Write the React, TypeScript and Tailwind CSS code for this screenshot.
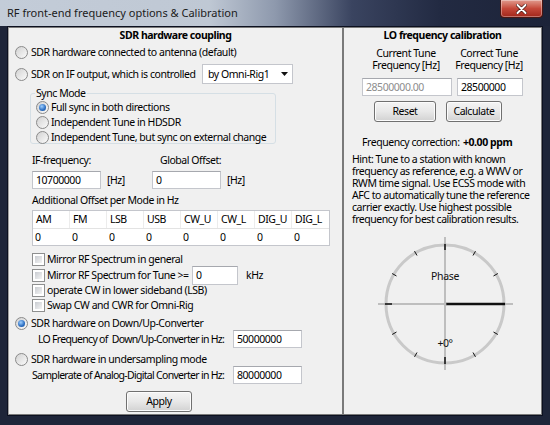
import React from "react";

function Radio({ checked = false }: { checked?: boolean }) {
  return (
    <span className="w-[13px] h-[13px] rounded-full border border-[#8a8a8a] bg-linear-to-br from-[#d2d2d2] to-[#fbfbfb] flex items-center justify-center shrink-0">
      {checked && (
        <span className="w-[7px] h-[7px] rounded-full bg-[radial-gradient(circle_at_40%_35%,#9fd0ff,#2a6cc0_60%,#174f96)]" />
      )}
    </span>
  );
}

function Check() {
  return (
    <span className="w-[13px] h-[13px] border border-[#8e8f8f] bg-white p-[2px] shrink-0 flex">
      <span className="block w-full h-full bg-linear-to-br from-[#c9ccd1] to-[#f4f4f4]" />
    </span>
  );
}

function TextBox({
  value,
  w,
  muted = false,
  h = "h-[18px]",
}: {
  value: string;
  w: string;
  muted?: boolean;
  h?: string;
}) {
  return (
    <div
      className={`${w} ${h} shrink-0 border border-[#c4c6cc] border-t-[#a6a8ae] bg-white flex items-center px-[3px] ${
        muted ? "text-[#8d8d8d]" : "text-black"
      }`}
    >
      {value}
    </div>
  );
}

function Button({ label, w }: { label: string; w: string }) {
  return (
    <div
      className={`${w} h-full border border-[#707070] rounded-[3px] bg-linear-to-b from-[#f4f4f4] via-[#e8e8e8] to-[#d2d2d2] flex items-center justify-center shadow-[inset_0_0_0_1px_#fcfcfc]`}
    >
      {label}
    </div>
  );
}

const modes = ["AM", "FM", "LSB", "USB", "CW_U", "CW_L", "DIG_U", "DIG_L"];

function Dial() {
  const cx = 70;
  const cy = 70;
  const r = 59;
  const ticks = [30, 60, 120, 150, 210, 240, 300, 330];
  return (
    <svg width="140" height="140" viewBox="0 0 140 140">
      <circle cx={cx} cy={cy} r={r} fill="none" stroke="#c9c9c9" strokeWidth="3" />
      <line x1={cx - 67} y1={cy} x2={cx + 68} y2={cy} stroke="#8c8c8c" strokeWidth="1" />
      <line x1={cx} y1={cy - 67} x2={cx} y2={cy + 66} stroke="#8c8c8c" strokeWidth="1" />
      {ticks.map((a) => {
        const rad = (a * Math.PI) / 180;
        const x1 = cx + Math.cos(rad) * (r - 3);
        const y1 = cy - Math.sin(rad) * (r - 3);
        const x2 = cx + Math.cos(rad) * (r + 2);
        const y2 = cy - Math.sin(rad) * (r + 2);
        return <line key={a} x1={x1} y1={y1} x2={x2} y2={y2} stroke="#111" strokeWidth="1" />;
      })}
      <line x1={cx - r - 1} y1={cy} x2={cx - r + 6} y2={cy} stroke="#111" strokeWidth="1.5" />
      <line x1={cx} y1={cy + r - 6} x2={cx} y2={cy + r + 1} stroke="#111" strokeWidth="1.5" />
      <line x1={cx} y1={cy - r - 1} x2={cx} y2={cy - r + 5} stroke="#111" strokeWidth="1.5" />
      <line x1={cx + 1} y1={cy} x2={cx + r + 1} y2={cy} stroke="#111" strokeWidth="2.5" />
      <circle cx={cx} cy={cy} r="1.5" fill="#bdbdbd" />
      <text x={cx} y={cy - 24} textAnchor="middle" fontSize="10.5" letterSpacing="-0.3" fill="#111" fontFamily="Noto Sans, sans-serif">
        Phase
      </text>
      <text x={cx} y={cy + 43} textAnchor="middle" fontSize="10.5" fill="#111" fontFamily="Noto Sans, sans-serif">
        +0°
      </text>
    </svg>
  );
}

export default function App() {
  return (
    <div className="w-[550px] h-[425px] flex flex-col bg-[#1e2539] font-['Noto_Sans',sans-serif] text-[10.5px] leading-[13px] tracking-[-0.45px] whitespace-nowrap text-black overflow-hidden">
      {/* Title bar */}
      <div className="h-[26px] shrink-0 flex items-start bg-[linear-gradient(90deg,#c3ccd8_0%,#bfc8d4_38%,#8e99ad_50%,#3a4460_64%,#222a42_80%,#1c2338_100%)]">
        <div className="pl-[7px] pt-[5px] text-[11px] leading-[15px] tracking-normal text-[#1b1b1b]">
          RF front-end frequency options &amp; Calibration
        </div>
        <div className="ml-auto mr-[7px] w-[43px] h-[18px] rounded-b-[4px] border border-[#4a1612] border-t-0 bg-linear-to-b from-[#e09a8e] via-[#c5483a] to-[#a1261a] flex items-center justify-center shadow-[inset_0_0_0_1px_rgba(255,255,255,0.35)]">
          <svg width="11" height="10" viewBox="0 0 11 10">
            <path d="M1.5 1 L9.5 9 M9.5 1 L1.5 9" stroke="#3a0b06" strokeWidth="3.2" strokeLinecap="round" />
            <path d="M1.5 1 L9.5 9 M9.5 1 L1.5 9" stroke="#ffffff" strokeWidth="2" strokeLinecap="round" />
          </svg>
        </div>
      </div>

      {/* Content */}
      <div className="flex-1 mx-[7px] mb-[9px] border border-[#0c1020] bg-[#f0f0f0] flex">
        {/* Left panel */}
        <div className="w-[335px] shrink-0 border border-[#7a7a7a] border-l-[#a0a0a0] flex flex-col">
          <div className="h-[15px] text-center font-bold leading-[15px]">SDR hardware coupling</div>
          <div className="h-[14px] mt-[2px] pl-[6px] flex items-center gap-[3px]">
            <Radio />
            <span>SDR hardware connected to antenna (default)</span>
          </div>
          <div className="h-[20px] mt-[5px] pl-[6px] flex items-center gap-[3px]">
            <Radio />
            <span className="w-[168px]">SDR on IF output, which is controlled</span>
            <div className="w-[91px] h-[20px] border border-[#c4c6cc] bg-white flex items-center pl-[5px] pr-[4px]">
              <span>by Omni-Rig1</span>
              <svg className="ml-auto" width="7" height="4" viewBox="0 0 7 4">
                <path d="M0 0 H7 L3.5 4 Z" fill="#111" />
              </svg>
            </div>
          </div>
          <fieldset className="ml-[21px] mt-[3px] w-[246px] h-[57px] border border-[#d5dfe5] rounded-[3px] px-[4px]">
            <legend className="px-[1px] leading-[13px]">Sync Mode</legend>
            <div className="flex flex-col">
              <div className="h-[15px] ml-[1px] flex items-center gap-[2px]">
                <Radio checked />
                <span>Full sync in both directions</span>
              </div>
              <div className="h-[15px] ml-[1px] flex items-center gap-[2px]">
                <Radio />
                <span>Independent Tune in HDSDR</span>
              </div>
              <div className="h-[15px] ml-[1px] flex items-center gap-[2px]">
                <Radio />
                <span>Independent Tune, but sync on external change</span>
              </div>
            </div>
          </fieldset>
          <div className="h-[14px] mt-[9px] pl-[23px] flex items-center">
            <span className="w-[128px]">IF-frequency:</span>
            <span>Global Offset:</span>
          </div>
          <div className="h-[18px] mt-[4px] pl-[23px] flex items-center">
            <TextBox value="10700000" w="w-[69px]" />
            <span className="ml-[6px] w-[45px]">[Hz]</span>
            <TextBox value="0" w="w-[69px]" />
            <span className="ml-[6px]">[Hz]</span>
          </div>
          <div className="h-[14px] mt-[4px] pl-[23px] flex items-center">Additional Offset per Mode in Hz</div>
          <div className="ml-[23px] mt-[3px] w-[298px] h-[36px] border border-[#c4c6cc] bg-white flex flex-col">
            <div className="h-[18px] grid grid-cols-8 border-b border-[#e3e3e3]">
              {modes.map((m) => (
                <div key={m} className="pl-[3px] flex items-center border-r border-[#ececec] last:border-r-0">
                  {m}
                </div>
              ))}
            </div>
            <div className="flex-1 grid grid-cols-8">
              {modes.map((m) => (
                <div key={m} className="pl-[2px] flex items-center">
                  0
                </div>
              ))}
            </div>
          </div>
          <div className="h-[16px] mt-[5px] pl-[23px] flex items-center gap-[2px]">
            <Check />
            <span>Mirror RF Spectrum in general</span>
          </div>
          <div className="h-[16px] pl-[23px] flex items-center gap-[2px]">
            <Check />
            <span className="w-[143px]">Mirror RF Spectrum for Tune &gt;=</span>
            <TextBox value="0" w="w-[46px]" h="h-[19px]" />
            <span className="ml-[6px]">kHz</span>
          </div>
          <div className="h-[15px] pl-[23px] flex items-center gap-[2px]">
            <Check />
            <span>operate CW in lower sideband (LSB)</span>
          </div>
          <div className="h-[15px] pl-[23px] flex items-center gap-[2px]">
            <Check />
            <span>Swap CW and CWR for Omni-Rig</span>
          </div>
          <div className="h-[14px] mt-[3px] pl-[6px] flex items-center gap-[3px]">
            <Radio checked />
            <span>SDR hardware on Down/Up-Converter</span>
          </div>
          <div className="h-[18px] pl-[29px] flex items-center">
            <span className="w-[195px] tracking-[-0.7px]">LO Frequency of&nbsp; Down/Up-Converter in Hz:</span>
            <TextBox value="50000000" w="w-[69px]" />
          </div>
          <div className="h-[14px] mt-[4px] pl-[6px] flex items-center gap-[3px]">
            <Radio />
            <span>SDR hardware in undersampling mode</span>
          </div>
          <div className="h-[18px] pl-[23px] flex items-center">
            <span className="w-[201px] tracking-[-0.7px]">Samplerate of Analog-Digital Converter in Hz:</span>
            <TextBox value="80000000" w="w-[69px]" />
          </div>
          <div className="h-[21px] mt-[7px] pl-[117px] flex">
            <Button label="Apply" w="w-[66px]" />
          </div>
        </div>

        {/* Right panel */}
        <div className="flex-1 border border-[#7a7a7a] flex flex-col">
          <div className="h-[15px] text-center font-bold leading-[15px]">LO frequency calibration</div>
          <div className="mt-[4px] pl-[21px] flex gap-[1px] leading-[12px] text-center">
            <div className="w-[82px] flex flex-col">
              <span>Current Tune</span>
              <span>Frequency [Hz]</span>
            </div>
            <div className="w-[82px] flex flex-col">
              <span>Correct Tune</span>
              <span>Frequency [Hz]</span>
            </div>
          </div>
          <div className="h-[18px] mt-[7px] pl-[18px] flex gap-[5px]">
            <TextBox value="28500000.00" w="w-[90px]" muted />
            <TextBox value="28500000" w="w-[66px]" />
          </div>
          <div className="h-[21px] mt-[5px] pl-[30px] flex gap-[10px]">
            <Button label="Reset" w="w-[62px]" />
            <Button label="Calculate" w="w-[56px]" />
          </div>
          <div className="h-[14px] mt-[13px] pl-[18px] flex items-center">
            <span className="w-[101px]">Frequency correction:</span>
            <span className="font-bold">+0.00 ppm</span>
          </div>
          <div className="mt-[4px] pl-[8px] flex flex-col leading-[12px]">
            <span>Hint: Tune to a station with known</span>
            <span>frequency as reference, e.g. a WWV or</span>
            <span>RWM time signal. Use ECSS mode with</span>
            <span>AFC to automatically tune the reference</span>
            <span>carrier exactly. Use highest possible</span>
            <span>frequency for best calibration results.</span>
          </div>
          <div className="mt-[9px] ml-[31px]">
            <Dial />
          </div>
        </div>
      </div>
    </div>
  );
}
